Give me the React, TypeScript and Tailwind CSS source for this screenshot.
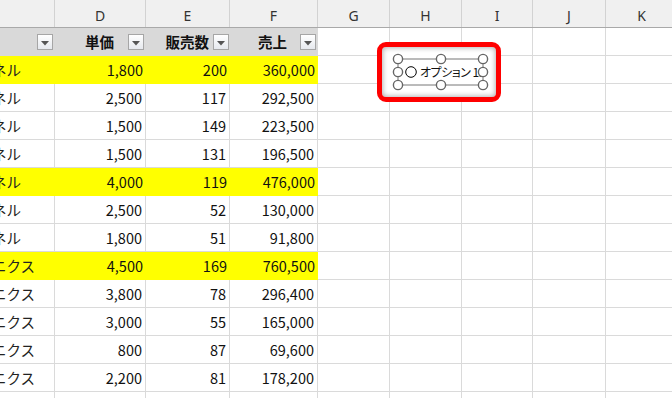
import React from "react";

// 列幅 (C〜K)
const cols = [
  { key: "C", w: "w-[55px]" },
  { key: "D", w: "w-[91px]" },
  { key: "E", w: "w-[84px]" },
  { key: "F", w: "w-[88px]" },
  { key: "G", w: "w-[72px]" },
  { key: "H", w: "w-[72px]" },
  { key: "I", w: "w-[71px]" },
  { key: "J", w: "w-[73px]" },
  { key: "K", w: "w-[72px]" },
];

type Row = { name: string; price: string; qty: string; sales: string; hl?: boolean };

const rows: Row[] = [
  { name: "ネル", price: "1,800", qty: "200", sales: "360,000", hl: true },
  { name: "ネル", price: "2,500", qty: "117", sales: "292,500" },
  { name: "ネル", price: "1,500", qty: "149", sales: "223,500" },
  { name: "ネル", price: "1,500", qty: "131", sales: "196,500" },
  { name: "ネル", price: "4,000", qty: "119", sales: "476,000", hl: true },
  { name: "ネル", price: "2,500", qty: "52", sales: "130,000" },
  { name: "ネル", price: "1,800", qty: "51", sales: "91,800" },
  { name: "ニクス", price: "4,500", qty: "169", sales: "760,500", hl: true },
  { name: "ニクス", price: "3,800", qty: "78", sales: "296,400" },
  { name: "ニクス", price: "3,000", qty: "55", sales: "165,000" },
  { name: "ニクス", price: "800", qty: "87", sales: "69,600" },
  { name: "ニクス", price: "2,200", qty: "81", sales: "178,200" },
  { name: "", price: "", qty: "", sales: "" },
];

function FilterButton() {
  return (
    <div className="w-[16px] h-[16px] shrink-0 border border-[#a6a6a6] bg-gradient-to-b from-white to-[#e6e9ee] flex items-center justify-center">
      <svg width="8" height="5" viewBox="0 0 8 5" className="mt-[2px]">
        <path d="M0 0 L8 0 L4 4.5 Z" fill="#555" />
      </svg>
    </div>
  );
}

function EmptyCells() {
  return (
    <>
      {cols.slice(4).map((c) => (
        <div key={c.key} className={`${c.w} h-full shrink-0 border-r border-b border-[#dadada]`} />
      ))}
    </>
  );
}

export default function App() {
  return (
    <div className="relative w-[672px] h-[398px] overflow-hidden bg-white text-[#111] font-['Noto_Sans_CJK_JP',sans-serif]">
      {/* 列見出し */}
      <div className="flex h-[28px] bg-[#f0f0f0] border-b border-[#a9a9a9]">
        {cols.map((c) => (
          <div
            key={c.key}
            className={`${c.w} h-full shrink-0 border-r border-[#d2d2d2] flex justify-center pt-[5px] text-[14px] text-[#333] font-['Noto_Sans',sans-serif]`}
          >
            {c.key === "C" ? "" : c.key}
          </div>
        ))}
      </div>

      {/* テーブル見出し */}
      <div className="flex h-[28px]">
        <div className="w-[55px] h-full shrink-0 bg-[#d9d9d9] flex items-center justify-end pr-[2px]">
          <FilterButton />
        </div>
        <div className="w-[91px] h-full shrink-0 bg-[#d9d9d9] flex items-center justify-end pr-[2px] font-bold text-[14.5px]">
          <span className="mr-[14px]">単価</span>
          <FilterButton />
        </div>
        <div className="w-[84px] h-full shrink-0 bg-[#d9d9d9] flex items-center justify-end pr-[1px] font-bold text-[14.5px]">
          <span className="mr-[4px]">販売数</span>
          <FilterButton />
        </div>
        <div className="w-[88px] h-full shrink-0 bg-[#d9d9d9] flex items-center justify-end pr-[2px] font-bold text-[14.5px]">
          <span className="mr-[13px]">売上</span>
          <FilterButton />
        </div>
        <EmptyCells />
      </div>

      {/* データ行 */}
      {rows.map((r, i) => {
        const cell = r.hl ? "bg-[#ffff00]" : "border-r border-b border-[#dadada]";
        return (
          <div key={i} className="flex h-[28px] text-[14.5px]">
            <div className={`w-[55px] h-full shrink-0 overflow-hidden flex items-center ${cell}`}>
              <span className="ml-[-8px] whitespace-nowrap text-[#222]">{r.name}</span>
            </div>
            <div className={`w-[91px] h-full shrink-0 flex items-center justify-end pr-[3px] ${cell}`}>{r.price}</div>
            <div className={`w-[84px] h-full shrink-0 flex items-center justify-end pr-[3px] ${cell}`}>{r.qty}</div>
            <div className={`w-[88px] h-full shrink-0 flex items-center justify-end pr-[3px] ${cell}`}>{r.sales}</div>
            <EmptyCells />
          </div>
        );
      })}

      {/* オプションボタン (選択中) と赤枠 */}
      <div className="absolute left-[377px] top-[42px] w-[124px] h-[60px] border-[5px] border-[#ff0000] rounded-[9px] bg-white shadow-[inset_0_0_5px_1px_rgba(0,0,0,0.3)]">
        <div className="relative w-full h-full">
          <svg width="12" height="12" viewBox="0 0 12 12" className="absolute left-[23px] top-[19px]">
            <circle cx="6" cy="6" r="5.3" fill="white" stroke="#000" strokeWidth="1" />
          </svg>
          <span className="absolute left-[38px] top-[16px] text-[12px] leading-[18px] tracking-[-0.5px] whitespace-nowrap text-[#111] [font-feature-settings:'palt']">
            オプション&nbsp;15
          </span>
          <svg width="114" height="50" viewBox="0 0 114 50" className="absolute left-0 top-0">
            <rect x="16" y="12" width="85" height="26" fill="none" stroke="#777" strokeWidth="1" />
            {[
              [16, 12], [59, 12], [101, 12],
              [16, 25], [101, 25],
              [16, 38], [59, 38], [101, 38],
            ].map(([x, y], k) => (
              <circle key={k} cx={x} cy={y} r="4.6" fill="white" stroke="#666" strokeWidth="1.4" />
            ))}
          </svg>
        </div>
      </div>
    </div>
  );
}
